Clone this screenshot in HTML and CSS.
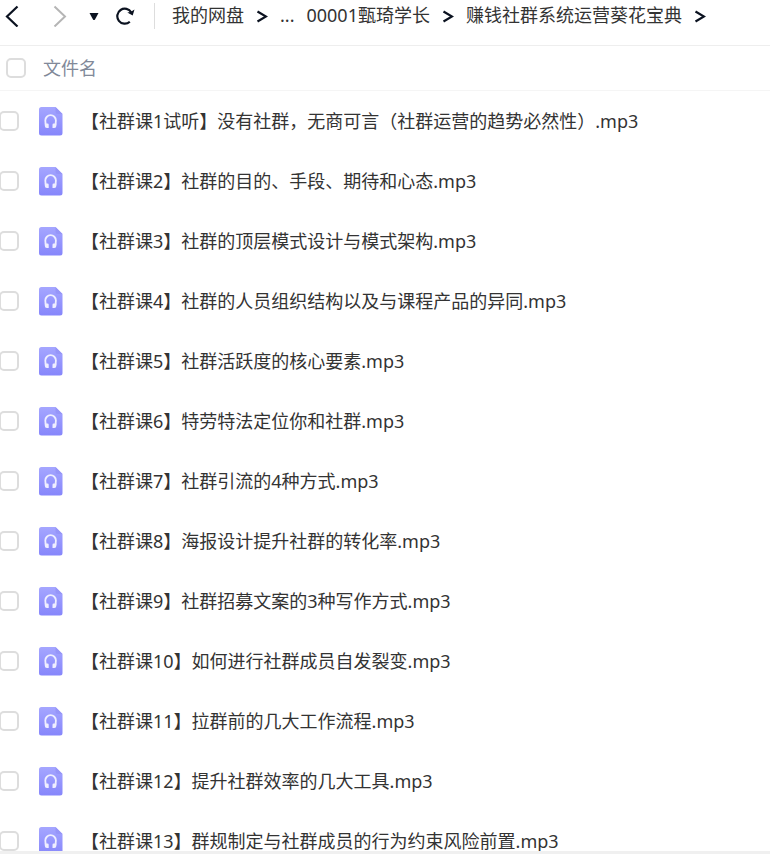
FILE: index.html
```html
<!DOCTYPE html>
<html lang="zh-CN">
<head>
<meta charset="utf-8">
<title>我的网盘</title>
<link rel="stylesheet" href="styles.css">
</head>
<body>

<svg class="sprite" aria-hidden="true">
  <defs>
    <linearGradient id="audio-bg" x1="0" y1="0" x2="0" y2="1">
      <stop offset="0" stop-color="#a5a6ff"/>
      <stop offset="1" stop-color="#8686fb"/>
    </linearGradient>
    <symbol id="audio" viewBox="0 0 24 29">
      <path d="M2.500 0H16.500L23.500 7V26a2.500 2.500 0 0 1-2.500 2.500H2.500A2.500 2.500 0 0 1 0 26V2.500A2.500 2.500 0 0 1 2.500 0z" fill="url(#audio-bg)"/>
      <path d="M16.500 0L23.500 7H19a2.500 2.500 0 0 1-2.500-2.500z" fill="#9695f8"/>
      <path d="M7.500 19.500C6.500 17.500 6.300 16 6.300 13.500a5.300 5.300 0 0 1 10.600 0c0 2.500-.2 4-1.200 6" fill="none" stroke="#eeeeff" stroke-width="1.800"/>
      <path d="M5.800 16.500H8.500a1.200 1.200 0 0 1 1.200 1.200V21H8a2.200 2.200 0 0 1-2.200-2.200zM17.400 16.500H14.700a1.200 1.200 0 0 0-1.200 1.200V21h1.700a2.200 2.200 0 0 0 2.200-2.200z" fill="#eeeeff"/>
    </symbol>
    <symbol id="arrow" viewBox="0 0 12 14">
      <path d="M1.500 2.500L10 7.500L1.500 12.500" fill="none" stroke="#0b1220" stroke-width="2.200"/>
    </symbol>
  </defs>
</svg>

<div class="page">
  <header class="toolbar">
    <button class="tool back" aria-label="后退">
      <svg width="14" height="22" viewBox="0 0 14 22"><path d="M12.500 1.500L2 11.500L12.500 21.500" fill="none" stroke="#0b1220" stroke-width="2.200"/></svg>
    </button>
    <button class="tool forward" aria-label="前进">
      <svg width="14" height="22" viewBox="0 0 14 22"><path d="M1.500 1.500L12 11.500L1.500 21.500" fill="none" stroke="#b5b5b5" stroke-width="2"/></svg>
    </button>
    <button class="tool history" aria-label="历史">
      <svg width="10" height="8" viewBox="0 0 10 8"><path d="M.5 1H9.500L6 7.500Q5 8.500 4 7.500z" fill="#0b1220"/></svg>
    </button>
    <button class="tool refresh" aria-label="刷新">
      <svg width="20" height="18" viewBox="0 0 20 18"><path d="M14.800 14.800A7.500 7.500 0 1 1 16.300 5.500" fill="none" stroke="#0b1220" stroke-width="2.200"/><path d="M19.500 2.500L17.700 8.500L12.300 5.500L15.500 5z" fill="#0b1220"/></svg>
    </button>
    <nav class="path">
      <a href="#">我的网盘</a>
      <svg class="sep"><use href="#arrow"/></svg>
      <a href="#">...</a>
      <a href="#">00001甄琦学长</a>
      <svg class="sep"><use href="#arrow"/></svg>
      <a href="#">赚钱社群系统运营葵花宝典</a>
      <svg class="sep"><use href="#arrow"/></svg>
    </nav>
  </header>

  <div class="list">
    <table class="files">
      <thead>
        <tr>
          <th class="check"><input type="checkbox" aria-label="全选"></th>
          <th class="title">文件名</th>
        </tr>
      </thead>
      <tbody>
        <tr>
          <td class="check"><input type="checkbox" id="f1"></td>
          <td><label class="name" for="f1"><svg class="icon"><use href="#audio"/></svg>【社群课1试听】没有社群，无商可言（社群运营的趋势必然性）.mp3</label></td>
        </tr>
        <tr>
          <td class="check"><input type="checkbox" id="f2"></td>
          <td><label class="name" for="f2"><svg class="icon"><use href="#audio"/></svg>【社群课2】社群的目的、手段、期待和心态.mp3</label></td>
        </tr>
        <tr>
          <td class="check"><input type="checkbox" id="f3"></td>
          <td><label class="name" for="f3"><svg class="icon"><use href="#audio"/></svg>【社群课3】社群的顶层模式设计与模式架构.mp3</label></td>
        </tr>
        <tr>
          <td class="check"><input type="checkbox" id="f4"></td>
          <td><label class="name" for="f4"><svg class="icon"><use href="#audio"/></svg>【社群课4】社群的人员组织结构以及与课程产品的异同.mp3</label></td>
        </tr>
        <tr>
          <td class="check"><input type="checkbox" id="f5"></td>
          <td><label class="name" for="f5"><svg class="icon"><use href="#audio"/></svg>【社群课5】社群活跃度的核心要素.mp3</label></td>
        </tr>
        <tr>
          <td class="check"><input type="checkbox" id="f6"></td>
          <td><label class="name" for="f6"><svg class="icon"><use href="#audio"/></svg>【社群课6】特劳特法定位你和社群.mp3</label></td>
        </tr>
        <tr>
          <td class="check"><input type="checkbox" id="f7"></td>
          <td><label class="name" for="f7"><svg class="icon"><use href="#audio"/></svg>【社群课7】社群引流的4种方式.mp3</label></td>
        </tr>
        <tr>
          <td class="check"><input type="checkbox" id="f8"></td>
          <td><label class="name" for="f8"><svg class="icon"><use href="#audio"/></svg>【社群课8】海报设计提升社群的转化率.mp3</label></td>
        </tr>
        <tr>
          <td class="check"><input type="checkbox" id="f9"></td>
          <td><label class="name" for="f9"><svg class="icon"><use href="#audio"/></svg>【社群课9】社群招募文案的3种写作方式.mp3</label></td>
        </tr>
        <tr>
          <td class="check"><input type="checkbox" id="f10"></td>
          <td><label class="name" for="f10"><svg class="icon"><use href="#audio"/></svg>【社群课10】如何进行社群成员自发裂变.mp3</label></td>
        </tr>
        <tr>
          <td class="check"><input type="checkbox" id="f11"></td>
          <td><label class="name" for="f11"><svg class="icon"><use href="#audio"/></svg>【社群课11】拉群前的几大工作流程.mp3</label></td>
        </tr>
        <tr>
          <td class="check"><input type="checkbox" id="f12"></td>
          <td><label class="name" for="f12"><svg class="icon"><use href="#audio"/></svg>【社群课12】提升社群效率的几大工具.mp3</label></td>
        </tr>
        <tr>
          <td class="check"><input type="checkbox" id="f13"></td>
          <td><label class="name" for="f13"><svg class="icon"><use href="#audio"/></svg>【社群课13】群规制定与社群成员的行为约束风险前置.mp3</label></td>
        </tr>
      </tbody>
    </table>
  </div>
</div>

</body>
</html>
```

FILE: styles.css
```css
* {
  box-sizing: border-box;
}
body {
  margin: 0;
  background: #fff;
  color: #333;
  font: 18px/24px "Noto Sans", "Noto Sans CJK SC", sans-serif;
}
svg {
  display: block;
  flex: none;
}
.sprite {
  position: absolute;
  width: 0;
  height: 0;
}
.page {
  display: flex;
  flex-direction: column;
  height: 100vh;
  padding-bottom: 10px;
}

/* toolbar */
.toolbar {
  display: flex;
  flex: none;
  align-items: center;
  height: 46px;
  padding: 0 0 13px 5px;
  border-bottom: 1px solid #eee;
}
.tool {
  padding: 0;
  border: 0;
  background: none;
}
.forward {
  margin-left: 34px;
}
.history {
  margin-left: 22px;
}
.refresh {
  margin-left: 16px;
}
.path {
  display: flex;
  align-items: center;
  gap: 12px;
  height: 26px;
  margin-left: 19px;
  padding-left: 17px;
  border-left: 1px solid #ddd;
  white-space: nowrap;
}
.path a {
  padding-bottom: 2px;
  color: #333;
  text-decoration: none;
}
.sep {
  width: 12px;
  height: 14px;
}

/* file list */
.list {
  flex: 1;
  min-height: 0;
  overflow: hidden;
  border-bottom: 3px solid #f0f0f0;
}
.files {
  width: 100%;
  border-spacing: 0;
}
th,
td {
  height: 60px;
  padding: 0;
  text-align: left;
}
th {
  height: 45px;
  border-bottom: 1px solid #f5f5f5;
  color: #818999;
  font-weight: normal;
}
.check {
  width: 39px;
}
th.check {
  padding-left: 6px;
}
th.title {
  padding-left: 4px;
}
input {
  display: block;
  appearance: none;
  width: 20px;
  height: 20px;
  margin: 0;
  border: 2px solid #ddd;
  border-radius: 5px;
  background: #fff;
}
td input {
  margin-left: -1px;
}
.name {
  display: flex;
  align-items: center;
  gap: 18px;
  white-space: nowrap;
}
.icon {
  width: 24px;
  height: 29px;
}
```
